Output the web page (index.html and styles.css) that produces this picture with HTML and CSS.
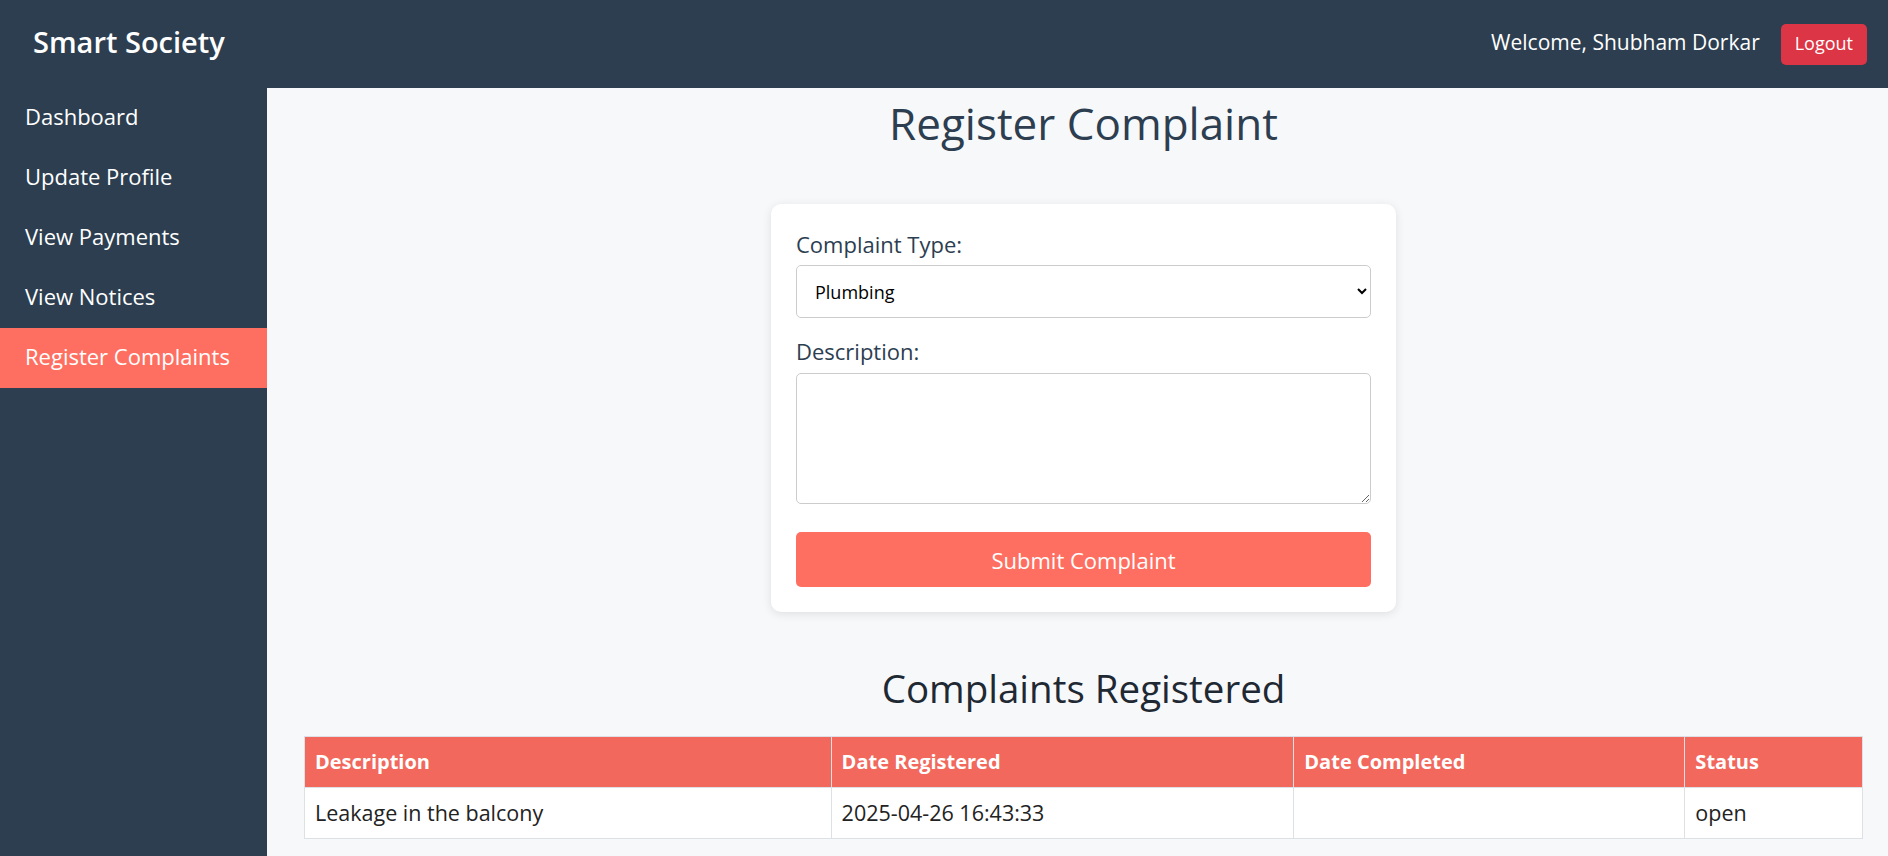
FILE: index.html
```html
<!DOCTYPE html>
<html lang="en">
<head>
<meta charset="utf-8">
<title>Register Complaint - Smart Society</title>
<link rel="stylesheet" href="styles.css">
</head>
<body>
<header class="topbar">
  <div class="brand">Smart Society</div>
  <div class="user-area">
    <span class="welcome">Welcome, Shubham Dorkar</span>
    <button class="logout-btn" type="button">Logout</button>
  </div>
</header>
<div class="layout">
  <nav class="sidebar">
    <a class="nav-item" href="#">Dashboard</a>
    <a class="nav-item" href="#">Update Profile</a>
    <a class="nav-item" href="#">View Payments</a>
    <a class="nav-item" href="#">View Notices</a>
    <a class="nav-item active" href="#">Register Complaints</a>
  </nav>
  <main class="main">
    <h2 class="page-title">Register Complaint</h2>
    <form class="card">
      <label class="field-label" for="ctype">Complaint Type:</label>
      <select id="ctype" class="field-select">
        <option>Plumbing</option>
        <option>Electrical</option>
        <option>Cleaning</option>
        <option>Security</option>
      </select>
      <label class="field-label" for="cdesc">Description:</label>
      <textarea id="cdesc" class="field-textarea"></textarea>
      <button class="submit-btn" type="button">Submit Complaint</button>
    </form>
    <h3 class="section-title">Complaints Registered</h3>
    <table class="complaints">
      <thead>
        <tr>
          <th class="col-desc">Description</th>
          <th class="col-reg">Date Registered</th>
          <th class="col-done">Date Completed</th>
          <th class="col-status">Status</th>
        </tr>
      </thead>
      <tbody>
        <tr>
          <td>Leakage in the balcony</td>
          <td>2025-04-26 16:43:33</td>
          <td></td>
          <td>open</td>
        </tr>
      </tbody>
    </table>
  </main>
</div>
</body>
</html>
```
FILE: styles.css
```css
* { box-sizing: border-box; }

html, body {
  margin: 0;
  padding: 0;
}

body {
  font-family: "Open Sans", "Noto Sans", sans-serif;
  background: #f7f8fa;
  color: #222;
  font-size: 20px;
}

.topbar {
  height: 88px;
  background: #2c3e50;
  color: #fff;
  display: flex;
  align-items: center;
  justify-content: space-between;
  padding: 0 21px 0 33px;
}

.brand {
  font-size: 29px;
  font-weight: 600;
  line-height: 40px;
  margin-bottom: 4px;
}

.user-area {
  display: flex;
  align-items: center;
  gap: 21px;
}

.welcome {
  font-size: 21px;
  line-height: 30px;
  margin-bottom: 4px;
}

.logout-btn {
  font-family: inherit;
  font-size: 18px;
  color: #fff;
  background: #dc3545;
  border: none;
  border-radius: 5px;
  height: 41px;
  padding: 0 14px 2px;
  cursor: pointer;
}

.layout {
  display: flex;
  min-height: calc(100vh - 88px);
}

.sidebar {
  width: 267px;
  flex-shrink: 0;
  background: #2c3e50;
  display: flex;
  flex-direction: column;
}

.nav-item {
  display: block;
  height: 60px;
  line-height: 56px;
  padding: 0 0 4px 25px;
  color: #fff;
  text-decoration: none;
  font-size: 22px;
  font-weight: 500;
}

.nav-item.active {
  background: #ff6f61;
}

.main {
  flex: 1;
  padding: 10px 25px 20px 37px;
}

.page-title {
  margin: 0;
  text-align: center;
  font-size: 44px;
  line-height: 50px;
  font-weight: 400;
  color: #2c3e50;
}

.card {
  width: 625px;
  margin: 56px auto 0;
  background: #fff;
  border-radius: 10px;
  box-shadow: 0 2px 10px rgba(0, 0, 0, 0.1);
  padding: 25px;
  display: flex;
  flex-direction: column;
}

.field-label {
  display: block;
  font-size: 22px;
  line-height: 30px;
  color: #2c3e50;
  margin-bottom: 6px;
}

.field-select {
  display: block;
  width: 100%;
  height: 53px;
  font-family: inherit;
  font-size: 18px;
  color: #000;
  padding: 0 14px;
  border: 1px solid #ccc;
  border-radius: 5px;
  background: #fff;
  margin-bottom: 18px;
}

.field-textarea {
  display: block;
  width: 100%;
  height: 131px;
  font-family: inherit;
  font-size: 18px;
  padding: 10px 14px;
  border: 1px solid #ccc;
  border-radius: 5px;
  background: #fff;
  margin: 1px 0 28px;
}

.submit-btn {
  display: block;
  width: 100%;
  height: 55px;
  font-family: inherit;
  font-size: 22px;
  color: #fff;
  background: #ff6f61;
  border: none;
  border-radius: 5px;
  cursor: pointer;
}

.section-title {
  margin: 56px 0 0;
  text-align: center;
  font-size: 38.5px;
  line-height: 40px;
  font-weight: 400;
  color: #1f2933;
}

.complaints {
  width: 100%;
  margin-top: 28px;
  border-collapse: collapse;
  background: #fff;
  table-layout: fixed;
}

.complaints th,
.complaints td {
  border: 1px solid #dde1e6;
  padding: 10px 10px;
  line-height: 30px;
  text-align: left;
}

.complaints th {
  font-size: 20px;
  background: #f2685c;
  color: #fff;
  font-weight: 700;
}

.complaints td {
  font-size: 21.5px;
  color: #222;
}

.col-desc { width: 33.8%; }
.col-reg { width: 29.7%; }
.col-done { width: 25.1%; }
.col-status { width: 11.4%; }
```
